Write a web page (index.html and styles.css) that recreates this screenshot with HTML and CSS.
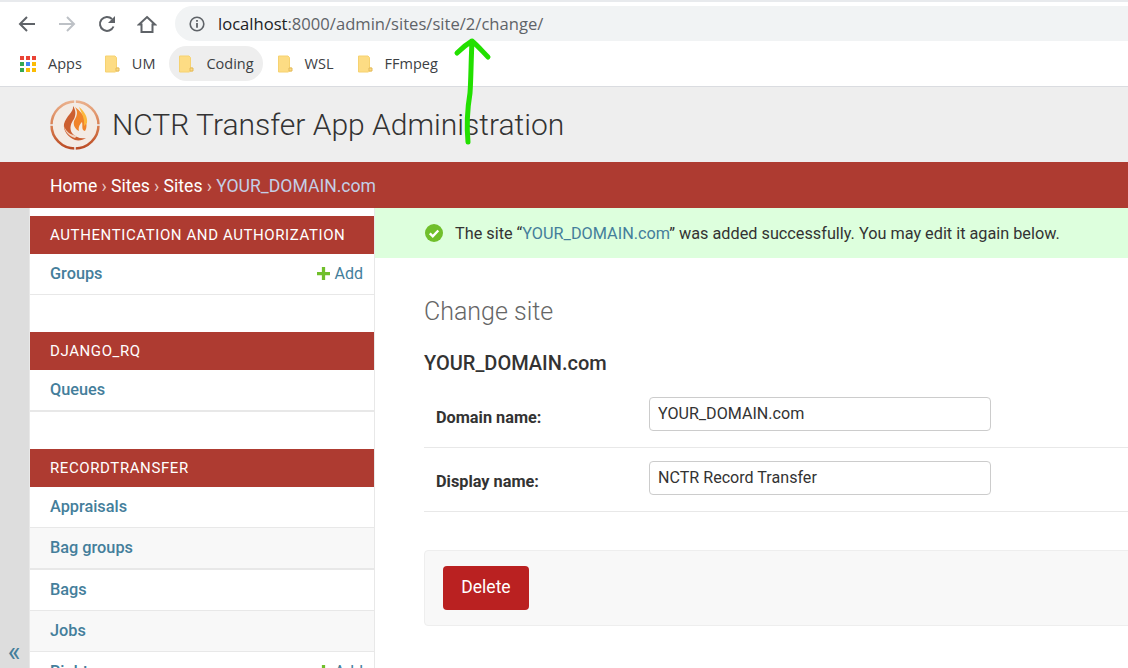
FILE: index.html
```html
<!DOCTYPE html>
<html lang="en">
<head>
<meta charset="utf-8">
<title>Change site</title>
<link rel="stylesheet" href="styles.css">
</head>
<body>
<div class="page">
  <div class="browser">
    <div class="toolbar">
      <svg class="nav-icon" viewBox="0 0 20 20"><path d="M18 10H3M10 3l-7 7 7 7" fill="none" stroke="#5f6368" stroke-width="2"/></svg>
      <svg class="nav-icon" viewBox="0 0 20 20"><path d="M2 10h15M10 3l7 7-7 7" fill="none" stroke="#bdc1c6" stroke-width="2"/></svg>
      <svg class="nav-icon" viewBox="0 0 20 20"><path d="M16.500 12.500A7 7 0 1 1 15 5" fill="none" stroke="#5f6368" stroke-width="2"/><path d="M18 2v7h-7z" fill="#5f6368"/></svg>
      <svg class="nav-icon" viewBox="0 0 20 20"><path d="M10 3l8 7.500h-2.500V18h-11v-7.500H2z" fill="none" stroke="#5f6368" stroke-width="2"/></svg>
      <div class="omnibox">
        <svg class="info" viewBox="0 0 16 16"><circle cx="8" cy="8" r="6.800" fill="none" stroke="#5f6368" stroke-width="1.600"/><path d="M7.100 7h1.800v4.800H7.100zM7.100 4h1.800v1.800H7.100z" fill="#5f6368"/></svg>
        <span class="host">localhost</span><span class="path">:8000/admin/sites/site/2/change/</span>
      </div>
    </div>
    <div class="bookmarks">
      <div class="bookmark apps">
        <svg class="apps-icon" viewBox="0 0 16 16">
          <rect width="4" height="4" fill="#ea4335"/><rect x="6" width="4" height="4" fill="#ea4335"/><rect x="12" width="4" height="4" fill="#ea4335"/>
          <rect y="6" width="4" height="4" fill="#34a853"/><rect x="6" y="6" width="4" height="4" fill="#4285f4"/><rect x="12" y="6" width="4" height="4" fill="#fbbc05"/>
          <rect y="12" width="4" height="4" fill="#34a853"/><rect x="6" y="12" width="4" height="4" fill="#fbbc05"/><rect x="12" y="12" width="4" height="4" fill="#fbbc05"/>
        </svg>
        <span>Apps</span>
      </div>
      <div class="bookmark"><svg class="folder" viewBox="0 0 16 18"><use href="#folder-shape"/></svg><span>UM</span></div>
      <div class="bookmark active"><svg class="folder" viewBox="0 0 16 18"><use href="#folder-shape"/></svg><span>Coding</span></div>
      <div class="bookmark"><svg class="folder" viewBox="0 0 16 18"><use href="#folder-shape"/></svg><span>WSL</span></div>
      <div class="bookmark"><svg class="folder" viewBox="0 0 16 18"><use href="#folder-shape"/></svg><span>FFmpeg</span></div>
    </div>
  </div>

  <header class="site-header">
    <svg class="logo" viewBox="0 0 50 50">
      <defs>
        <linearGradient id="ring" x1="0" y1="0" x2="0" y2="1"><stop offset="0" stop-color="#eab08c"/><stop offset="0.55" stop-color="#d77b4c"/><stop offset="1" stop-color="#bb4c25"/></linearGradient>
      </defs>
      <circle cx="25" cy="25" r="23.500" fill="#f3ebe4" stroke="url(#ring)" stroke-width="2.500"/>
      <path d="M25 0v4M25 46v4M0 25h4M46 25h4" stroke="#eeeeee" stroke-width="1.500"/>
      <path d="M23 6c1 6-7 10-9 18-1 7 4 13 11 16 4 1 8 0 11-2-6 1-11-1-14-5-3-5-1-10 2-14 2-4 2-9-1-13z" fill="#cc5f30"/>
      <path d="M25 7c4 6 1 10-1 14-1 4 1 8 5 10-1-4 1-7 3-9 1 4-1 8 3 9 2-3 2-8 0-12-2-5-5-8-10-12z" fill="#f0842b"/>
      <path d="M29 7c5 4 9 10 8 16l-3 3c1-7-2-12-5-19z" fill="#fcb83c"/>
      <path d="M14 26c2 6 7 9 13 10l-2 2c-6-2-10-6-11-12z" fill="#f2d3bf"/>
    </svg>
    <h1 class="site-title">NCTR Transfer App Administration</h1>
  </header>

  <nav class="crumbs"><a>Home</a><i>›</i><a>Sites</a><i>›</i><a>Sites</a><i>›</i><span>YOUR_DOMAIN.com</span></nav>

  <div class="layout">
    <div class="toggle"><span class="toggle-mark">«</span></div>
    <aside class="sidebar">
      <section class="module">
        <h2 class="caption">AUTHENTICATION AND AUTHORIZATION</h2>
        <div class="row"><a class="model">Groups</a><a class="add"><svg class="plus" viewBox="0 0 12 12"><path d="M4.500 0h3v4.500H12v3H7.500V12h-3V7.500H0v-3h4.500z" fill="#70bf2b"/></svg>Add</a></div>
      </section>
      <section class="module">
        <h2 class="caption">DJANGO_RQ</h2>
        <div class="row thick"><a class="model">Queues</a></div>
      </section>
      <section class="module">
        <h2 class="caption">RECORDTRANSFER</h2>
        <div class="row"><a class="model">Appraisals</a></div>
        <div class="row alt thick"><a class="model">Bag groups</a></div>
        <div class="row"><a class="model">Bags</a></div>
        <div class="row alt"><a class="model">Jobs</a></div>
        <div class="row"><a class="model">Rights</a><a class="add"><svg class="plus" viewBox="0 0 12 12"><path d="M4.500 0h3v4.500H12v3H7.500V12h-3V7.500H0v-3h4.500z" fill="#70bf2b"/></svg>Add</a></div>
      </section>
    </aside>
    <main class="main">
      <div class="message">
        <svg class="ok" viewBox="0 0 18 18"><circle cx="9" cy="9" r="9" fill="#70bf2b"/><path d="M4.800 9.300l3 3 5.500-5.800" fill="none" stroke="#fff" stroke-width="2.400"/></svg>
        <p>The site “<a>YOUR_DOMAIN.com</a>” was added successfully. You may edit it again below.</p>
      </div>
      <div class="content">
        <h1 class="page-title">Change site</h1>
        <h2 class="object-title">YOUR_DOMAIN.com</h2>
        <div class="form-row">
          <label class="field-label">Domain name:</label>
          <input class="field" type="text" value="YOUR_DOMAIN.com">
        </div>
        <div class="form-row">
          <label class="field-label">Display name:</label>
          <input class="field" type="text" value="NCTR Record Transfer">
        </div>
        <div class="submit-row"><a class="delete">Delete</a></div>
      </div>
    </main>
  </div>

  <svg class="annotation" viewBox="0 0 60 120">
    <path d="M11 23C15 19 21 14 26 11 31 15 37 22 42 27M26 11C25 30 25 50 24 63 22 75 20 90 22 112" fill="none" stroke="#22e000" stroke-width="5" stroke-linecap="round" stroke-linejoin="round"/>
  </svg>
  <svg class="defs" width="0" height="0">
    <symbol id="folder-shape" viewBox="0 0 16 18">
      <path d="M1.500 1h9.500l1.500 1.500V13h2v3h-2l-1 1H1.500z" fill="#fddc84" stroke="#f6d271" stroke-width="1"/>
      <path d="M12 13h3v3h-3z" fill="#fddc84" stroke="#e3b95a" stroke-width="1"/>
    </symbol>
  </svg>
</div>
</body>
</html>
```
FILE: styles.css
```css
* { box-sizing: border-box; }
html, body { margin: 0; padding: 0; height: 100%; overflow: hidden; background: #fff; }
body { font-family: Roboto, "Liberation Sans", sans-serif; color: #333; }
.page { position: relative; width: 1128px; height: 668px; overflow: hidden; }
h1, h2, p { margin: 0; }

.browser { height: 87px; border-top: 2px solid #e8eaed; border-bottom: 1px solid #dadce0; background: #fff; }
.toolbar { height: 44px; display: flex; align-items: center; padding-left: 17px; }
.nav-icon { width: 20px; height: 20px; margin-right: 20px; flex: none; }
.nav-icon:nth-child(4) { margin-right: 18px; }
.omnibox { flex: 1; height: 35px; margin-top: -1px; border-radius: 18px 0 0 18px; background: #f1f3f4; display: flex; align-items: center; padding-left: 14px; font-family: "Open Sans", sans-serif; font-size: 16.600px; white-space: nowrap; }
.info { width: 16px; height: 16px; margin-right: 13px; }
.host { color: #202124; }
.path { color: #5f6368; }

.bookmarks { height: 40px; display: flex; align-items: center; gap: 5px; padding-left: 11px; padding-bottom: 5px; font-family: "Open Sans", sans-serif; font-size: 14.500px; color: #3c4043; }
.bookmark { display: flex; align-items: center; height: 35px; padding: 0 9px; border-radius: 18px; }
.bookmark.apps { padding-right: 8px; }
.bookmark.active { background: #eeeeee; }
.apps-icon { width: 16px; height: 16px; margin-right: 12px; }
.folder { width: 16px; height: 18px; margin-right: 12px; }

.site-header { height: 75px; background: #eeeeee; display: flex; align-items: center; padding-left: 50px; }
.logo { width: 50px; height: 50px; margin-right: 12px; flex: none; }
.site-title { font-weight: 300; font-size: 30px; color: #333; white-space: nowrap; }

.crumbs { height: 46px; background: #ae3b31; display: flex; align-items: center; padding: 2px 0 0 50px; font-size: 17.600px; color: #fff; white-space: nowrap; }
.crumbs i { font-style: normal; margin: 0 4.200px; color: #e6c4c0; }
.crumbs span { color: #c4cfe6; }

.layout { display: flex; height: 460px; }
.toggle { width: 30px; flex: none; background: #dddddd; border-right: 1px solid #e8e8e8; display: flex; align-items: flex-end; justify-content: center; }
.toggle-mark { color: #447e9b; font-size: 27px; line-height: 1; margin-bottom: 2px; margin-right: 1px; }
.sidebar { width: 345px; flex: none; border-right: 1px solid #e8e8e8; padding-top: 8px; }
.module { margin-bottom: 37px; }
.caption { height: 38px; background: #ae3b31; color: #fff; font-size: 15px; font-weight: 400; letter-spacing: 0.6px; line-height: 38px; padding-left: 20px; white-space: nowrap; }
.row { height: 41px; display: flex; align-items: center; justify-content: space-between; padding: 0 11px 2px 20px; border-bottom: 1px solid #e8e8e8; font-size: 16.300px; background: #fff; }
.row.thick { height: 42px; border-bottom-width: 2px; }
.row.alt { background: #f8f8f8; }
.model { color: #447e9b; font-weight: 500; }
.add { color: #447e9b; display: flex; align-items: center; }
.plus { width: 13px; height: 13px; margin-right: 5px; }
.add { font-size: 16px; }

.main { flex: 1; min-width: 0; }
.message { height: 50px; background: #ddffdd; display: flex; align-items: center; padding-left: 50px; font-size: 16.250px; white-space: nowrap; }
.ok { width: 18px; height: 18px; margin-right: 12px; flex: none; }
.message a { color: #447e9b; }
.content { padding: 38px 0 0 49px; width: 780px; }
.page-title { font-weight: 300; font-size: 25px; line-height: 32px; color: #666; }
.object-title { margin-top: 22px; margin-bottom: 8px; font-size: 20px; font-weight: 500; line-height: 26px; color: #333; }
.form-row { height: 64px; display: flex; align-items: center; border-bottom: 1px solid #e8e8e8; padding-left: 12px; }
.field-label { width: 213px; font-size: 16.300px; font-weight: 700; padding-top: 4px; }
.field { width: 342px; height: 34px; border: 1px solid #cccccc; border-radius: 4px; padding: 0 8px; font-family: Roboto, sans-serif; font-size: 16.100px; color: #333; background: #fff; margin-bottom: 4px; }
.submit-row { margin-top: 38px; height: 76px; background: #f8f8f8; border: 1px solid #eeeeee; border-radius: 4px; display: flex; align-items: center; padding-left: 18px; }
.delete { width: 86px; height: 44px; background: #ba2121; border-radius: 4px; color: #fff; font-size: 17.500px; display: flex; align-items: center; justify-content: center; padding-bottom: 2px; }

.annotation { position: absolute; left: 446px; top: 30px; width: 60px; height: 120px; }
.defs { position: absolute; }
```
